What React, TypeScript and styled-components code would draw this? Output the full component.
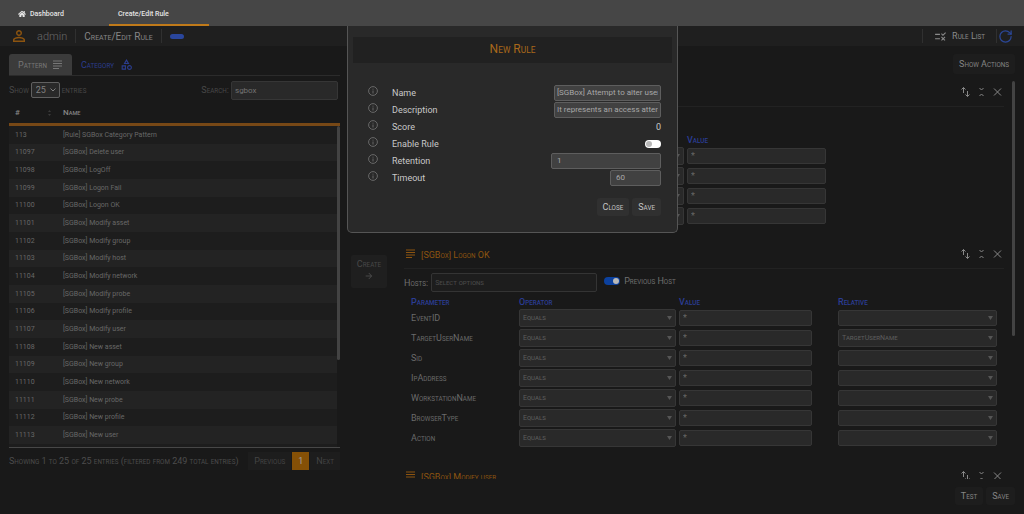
import React from "react";
import styled, { createGlobalStyle, css } from "styled-components";
import { RotateCw } from "lucide-react";
import { FaHome } from "react-icons/fa";
import { MdOutlineCategory, MdPersonOutline, MdRule, MdArrowForward } from "react-icons/md";

const GlobalStyle = createGlobalStyle`
  * { box-sizing: border-box; }
  body { margin: 0; background: #191919; color: #777; font-family: Roboto, "Liberation Sans", sans-serif; font-size: 9px; }
  button, input, select { font: inherit; color: inherit; margin: 0; }
  svg { display: block; flex: none; }
`;

const Page = styled.div`
  position: relative;
  display: flex;
  flex-direction: column;
  height: 100vh;
  min-height: 480px;
  overflow: hidden;
`;

const CapsText = styled.span`
  white-space: pre-wrap;
`;

const SmallLetters = styled.span`
  font-size: 70%;
  text-transform: uppercase;
`;

/* Small capitals: each run of lower-case letters is set as reduced capitals. */
function Caps({ children }: { children: string }) {
  return (
    <CapsText>
      {children.split(/([a-z]+)/).map((part, i) => (i % 2 ? <SmallLetters key={i}>{part}</SmallLetters> : part))}
    </CapsText>
  );
}

const TopTabs = styled.nav`
  display: flex;
  flex: none;
  height: 26px;
  padding-left: 9px;
  background: #464646;
`;

const TopTab = styled.a<{ $active?: boolean }>`
  display: flex;
  align-items: center;
  gap: 4px;
  width: 100px;
  padding: 3px 9px 0;
  border-bottom: 2px solid ${(p) => (p.$active ? "#c07a1a" : "transparent")};
  color: #e4e4e4;
  font-size: 7px;
  font-weight: 500;
  text-decoration: none;
`;

const UserBar = styled.header`
  display: flex;
  flex: none;
  align-items: center;
  height: 20px;
  padding: 0 11px 0 10px;
  background: #1f1f1f;
`;

const UserName = styled.span`
  margin-left: 9px;
  color: #686868;
  font-size: 11px;
  font-weight: 300;
`;

const PageTitle = styled.h1`
  margin: 0;
  color: #868686;
  font-size: 10px;
  font-weight: 400;
`;

const Separator = styled.span<{ $tight?: boolean }>`
  width: 1px;
  height: 14px;
  margin: ${(p) => (p.$tight ? "0 1px 0 8px" : "0 8px")};
  background: #303030;
`;

const Pill = styled.span`
  width: 14px;
  height: 5px;
  border-radius: 3px;
  background: #2a469c;
`;

const RuleListLink = styled.a`
  display: flex;
  align-items: center;
  gap: 5px;
  margin: 0 3px;
  color: #8a8a8a;
  text-decoration: none;
`;

const Spacer = styled.span`
  flex: 1;
`;

const IconButton = styled.button`
  display: flex;
  padding: 0;
  border: 0;
  background: none;
  color: inherit;
`;

const Main = styled.main`
  display: grid;
  flex: 1;
  grid-template-columns: minmax(0, 331fr) 64px minmax(0, 611fr);
  min-height: 0;
  padding: 8px 9px 9px;
`;

const PatternPanel = styled.section`
  display: flex;
  flex-direction: column;
  min-height: 0;
  padding-bottom: 35px;
`;

const PanelTabs = styled.div`
  display: flex;
  flex: none;
  height: 22px;
  border-bottom: 1px solid #2b2b2b;
`;

const PanelTab = styled.button<{ $active?: boolean }>`
  display: flex;
  align-items: center;
  gap: 6px;
  padding: 0 10px 0 9px;
  border: 0;
  border-radius: 3px 3px 0 0;
  background: ${(p) => (p.$active ? "#3b3b3b" : "transparent")};
  color: ${(p) => (p.$active ? "#777" : "#2b3d8f")};
`;

const Filters = styled.div`
  display: flex;
  flex: none;
  align-items: center;
  justify-content: space-between;
  height: 28px;
  padding-right: 2px;
  color: #484848;
`;

const FilterLabel = styled.label`
  display: flex;
  align-items: center;
  gap: 2px;
`;

const fieldLook = css`
  border: 1px solid #363636;
  border-radius: 2px;
  background: #292929;
  outline: none;
`;

const CountBox = styled.span`
  position: relative;
  display: flex;
`;

const CountSelect = styled.select`
  ${fieldLook}
  appearance: none;
  width: 29px;
  height: 16px;
  padding: 0 4px;
  border-color: #606060;
  color: #808080;
`;

const SearchInput = styled.input`
  ${fieldLook}
  width: 107px;
  height: 19px;
  padding: 0 3px;
  color: #737373;
  font-size: 8px;
`;

const PatternTable = styled.table`
  width: 100%;
  border-collapse: collapse;
  table-layout: fixed;
  color: #686868;
  font-size: 7px;
  text-align: left;
`;

const HeadRow = styled.div`
  flex: none;
  height: 22px;
  border-bottom: 3px solid #774816;
`;

const HeadCell = styled.th<{ $id?: boolean }>`
  width: ${(p) => (p.$id ? "48px" : "auto")};
  height: 17px;
  padding: 0 6px;
  color: #858585;
  font-size: 8px;
  font-weight: 500;
`;

const HeadContent = styled.div`
  display: flex;
  align-items: center;
  justify-content: space-between;
`;

const ScrollRow = styled.div`
  display: flex;
  flex: 1 1 0;
  min-height: 0;
  border-bottom: 1px solid #474747;
`;

const ScrollBody = styled.div`
  flex: 1;
  min-width: 0;
  overflow: hidden;
  background: #1d1d1d;
`;

const BodyTable = styled(PatternTable)`
  height: 318px;
`;

const BodyRow = styled.tr`
  background: #1d1d1d;
  &:nth-child(even) { background: #232323; }
`;

const BodyCell = styled.td<{ $id?: boolean }>`
  width: ${(p) => (p.$id ? "48px" : "auto")};
  padding: 0 6px;
`;

const ScrollTrack = styled.div`
  width: 3px;
  background: #191919;
`;

const ScrollThumb = styled.div<{ $size: string }>`
  height: ${(p) => p.$size};
  border-radius: 2px;
  background: #434343;
`;

const TableFoot = styled.div`
  display: flex;
  flex: none;
  align-items: center;
  justify-content: space-between;
  height: 22px;
  padding-top: 4px;
  color: #4c4c4c;
  white-space: nowrap;
`;

const Pager = styled.div`
  display: flex;
  gap: 1px;
`;

const PageButton = styled.button<{ $current?: boolean }>`
  height: 18px;
  padding: 0 6px;
  border: 0;
  background: ${(p) => (p.$current ? "#855006" : "#1d1d1d")};
  color: ${(p) => (p.$current ? "#a0a0a0" : "#444")};
`;

const CreateColumn = styled.div`
  padding: 201px 17px 0 11px;
`;

const CreateButton = styled.button`
  display: flex;
  flex-direction: column;
  align-items: center;
  gap: 2px;
  width: 100%;
  padding: 4px 0 7px;
  border: 0;
  border-radius: 2px;
  background: #1f1f1f;
  color: #484848;
`;

const RulePanel = styled.section`
  display: flex;
  flex-direction: column;
  min-height: 0;
`;

const ButtonRow = styled.div`
  display: flex;
  flex: none;
  justify-content: flex-end;
  gap: 3px;
`;

const TextButton = styled.button<{ $tall?: boolean; $bright?: boolean }>`
  height: ${(p) => (p.$tall ? "20px" : "18px")};
  padding: 0 6px;
  border: 0;
  border-radius: 3px;
  background: ${(p) => (p.$bright ? "#303030" : "#1d1d1d")};
  color: ${(p) => (p.$bright ? "#c4c4c4" : "#858585")};
`;

const RuleScroll = styled.div`
  display: flex;
  flex: 1 1 0;
  min-height: 0;
  margin: 7px 0 8px;
  overflow: hidden;
`;

const RuleList = styled.div`
  flex: 1;
  min-width: 0;
  padding-right: 8px;
`;

const RuleCard = styled.article`
  padding-bottom: 17px;
`;

const RuleHead = styled.div`
  display: flex;
  align-items: center;
  height: 26px;
  padding: 0 1px 4px 2px;
  border-bottom: 1px solid #222;
  color: #8c5410;
`;

const RuleTitle = styled.h2`
  flex: 1;
  margin: 0 0 0 6px;
  padding-top: 2px;
  font-size: 9px;
  font-weight: 400;
`;

const RuleTools = styled.div`
  display: flex;
  gap: 5px;
  color: #888;
`;

const HostRow = styled.div`
  display: flex;
  align-items: center;
  height: 27px;
  color: #707070;
`;

const HostInput = styled.input`
  ${fieldLook}
  width: 166px;
  height: 19px;
  margin: 0 7px 0 3px;
  padding: 0 3px;
  background: #1d1d1d;
  border-color: #343434;
  font-variant: small-caps;
  font-size: 7px;
  &::placeholder { color: #4a4a4a; opacity: 1; }
`;

const ToggleLabel = styled.label`
  display: flex;
  align-items: center;
  gap: 4px;
  padding-bottom: 4px;
`;

const Toggle = styled.input`
  appearance: none;
  display: flex;
  align-items: center;
  width: 16px;
  height: 8px;
  padding: 0 1px;
  border-radius: 4px;
  background: #fff;
  &::before {
    content: "";
    width: 6px;
    height: 6px;
    border-radius: 50%;
    background: #b8b8b8;
  }
  &:checked { justify-content: flex-end; background: #0c419e; }
`;

const ParamTable = styled.div<{ $columns: string }>`
  display: grid;
  grid-template-columns: ${(p) => p.$columns};
  grid-template-rows: 12px;
  grid-auto-rows: 20px;
  column-gap: 3px;
  align-items: center;
  padding: 0 7px;
  color: #6a6a6a;
`;

const ParamHead = styled.div<{ $inset?: boolean }>`
  margin-left: ${(p) => (p.$inset ? "23px" : "0")};
  color: #2b3d96;
  font-weight: 500;
`;

const SelectBox = styled.div<{ $inset?: boolean }>`
  position: relative;
  display: flex;
  margin-left: ${(p) => (p.$inset ? "23px" : "0")};
`;

const ParamSelect = styled.select<{ $short?: boolean }>`
  ${fieldLook}
  appearance: none;
  width: 100%;
  height: ${(p) => (p.$short ? "16px" : "18px")};
  padding: 0 3px;
  color: #5c5c5c;
  font-size: 7px;
  font-variant: small-caps;
`;

const SelectArrow = styled.svg`
  position: absolute;
  right: 4px;
  top: 50%;
  margin-top: -2px;
  color: #555;
  pointer-events: none;
`;

const ValueInput = styled.input`
  ${fieldLook}
  width: 100%;
  height: 16px;
  padding: 0 3px;
  color: #666;
`;

const Modal = styled.div`
  position: absolute;
  top: 26px;
  left: 50%;
  width: 331px;
  margin-left: -165px;
  padding: 11px 5px 16px;
  border: 1px solid #555;
  border-top: 0;
  border-radius: 0 0 5px 5px;
  background: #292929;
  color: #c8c8c8;
`;

const ModalTitle = styled.h2`
  margin: 0;
  background: #212121;
  color: #a9681a;
  font-size: 12px;
  font-weight: 400;
  line-height: 25px;
  text-align: center;
`;

const ModalForm = styled.form`
  padding: 21px 11px 0 15px;
`;

const FormRow = styled.div`
  display: flex;
  align-items: center;
  height: 17px;
`;

const FormLabel = styled.label`
  flex: 1;
  margin-left: 14px;
`;

const InfoIcon = styled.svg`
  margin-bottom: 3px;
  color: #777;
`;

const FormInput = styled.input<{ $width: string; $indent?: boolean }>`
  width: ${(p) => p.$width};
  height: 16px;
  padding: 0 ${(p) => (p.$indent ? "5px" : "2px")};
  border: 1px solid #5e5e5e;
  border-radius: 2px;
  background: #414141;
  color: #a8a8a8;
  font-size: 8px;
  outline: none;
`;

const ModalActions = styled(ButtonRow)`
  margin-top: 12px;
`;

const patterns: [string, string][] = [
  ["113", "[Rule] SGBox Category Pattern"],
  ["11097", "[SGBox] Delete user"],
  ["11098", "[SGBox] LogOff"],
  ["11099", "[SGBox] Logon Fail"],
  ["11100", "[SGBox] Logon OK"],
  ["11101", "[SGBox] Modify asset"],
  ["11102", "[SGBox] Modify group"],
  ["11103", "[SGBox] Modify host"],
  ["11104", "[SGBox] Modify network"],
  ["11105", "[SGBox] Modify probe"],
  ["11106", "[SGBox] Modify profile"],
  ["11107", "[SGBox] Modify user"],
  ["11108", "[SGBox] New asset"],
  ["11109", "[SGBox] New group"],
  ["11110", "[SGBox] New network"],
  ["11111", "[SGBox] New probe"],
  ["11112", "[SGBox] New profile"],
  ["11113", "[SGBox] New user"],
];

const logonParams = ["EventID", "TargetUserName", "Sid", "IpAddress", "WorkstationName", "BrowserType", "Action"];

function SubjectIcon() {
  return (
    <svg width="9" height="9" viewBox="0 0 18 18" stroke="currentColor" strokeWidth="2">
      <path d="M0 2h18M0 7h18M0 12h18M0 17h12" />
    </svg>
  );
}

function Arrow() {
  return (
    <SelectArrow width="5" height="4" viewBox="0 0 5 4">
      <path d="M0 0h5L2.500 4z" fill="currentColor" />
    </SelectArrow>
  );
}

function Tools() {
  return (
    <RuleTools>
      <IconButton type="button" aria-label="Move rule">
        <svg width="11" height="12" viewBox="0 0 22 24" fill="none" stroke="currentColor" strokeWidth="2">
          <path d="M7 14V3M3 7l4-4 4 4M15 10v11M11 17l4 4 4-4" />
        </svg>
      </IconButton>
      <IconButton type="button" aria-label="Collapse rule">
        <svg width="11" height="12" viewBox="0 0 22 24" fill="none" stroke="currentColor" strokeWidth="2">
          <path d="M7 4l4 4 4-4M7 20l4-4 4 4" />
        </svg>
      </IconButton>
      <IconButton type="button" aria-label="Remove rule">
        <svg width="11" height="12" viewBox="0 0 22 24" fill="none" stroke="currentColor" strokeWidth="2">
          <path d="M4 5l14 14M18 5L4 19" />
        </svg>
      </IconButton>
    </RuleTools>
  );
}

function Info() {
  return (
    <InfoIcon width="10" height="10" viewBox="0 0 20 20" fill="none" stroke="currentColor" strokeWidth="1.6">
      <circle cx="10" cy="10" r="8.8" />
      <path d="M10 9v6M10 5.4v1.8" />
    </InfoIcon>
  );
}

function FirstRule() {
  return (
    <RuleCard>
      <RuleHead>
        <Spacer />
        <Tools />
      </RuleHead>
      <HostRow />
      <ParamTable $columns="105fr 165fr 139fr 168fr">
        <span />
        <span />
        <ParamHead><Caps>Value</Caps></ParamHead>
        <span />
        {[1, 2, 3, 4].map((n) => (
          <React.Fragment key={n}>
            <span />
            <SelectBox>
              <ParamSelect aria-label={`Operator ${n}`} />
              <Arrow />
            </SelectBox>
            <ValueInput aria-label={`Value ${n}`} defaultValue="*" />
            <span />
          </React.Fragment>
        ))}
      </ParamTable>
    </RuleCard>
  );
}

function LogonRule() {
  return (
    <RuleCard>
      <RuleHead>
        <SubjectIcon />
        <RuleTitle><Caps>[SGBox] Logon OK</Caps></RuleTitle>
        <Tools />
      </RuleHead>
      <HostRow>
        <label htmlFor="hosts"><Caps>Hosts:</Caps></label>
        <HostInput id="hosts" placeholder="Select options" />
        <ToggleLabel>
          <Toggle type="checkbox" defaultChecked />
          <Caps>Previous Host</Caps>
        </ToggleLabel>
      </HostRow>
      <ParamTable $columns="105fr 157fr 133fr 182fr">
        <ParamHead><Caps>Parameter</Caps></ParamHead>
        <ParamHead><Caps>Operator</Caps></ParamHead>
        <ParamHead><Caps>Value</Caps></ParamHead>
        <ParamHead $inset><Caps>Relative</Caps></ParamHead>
        {logonParams.map((name) => {
          const relative = name === "TargetUserName";
          return (
            <React.Fragment key={name}>
              <Caps>{name}</Caps>
              <SelectBox>
                <ParamSelect aria-label={`${name} operator`}>
                  <option>Equals</option>
                </ParamSelect>
                <Arrow />
              </SelectBox>
              <ValueInput aria-label={`${name} value`} defaultValue="*" />
              <SelectBox $inset>
                <ParamSelect $short={!relative} aria-label={`${name} relative`}>
                  <option>{relative ? "TargetUserName" : ""}</option>
                </ParamSelect>
                <Arrow />
              </SelectBox>
            </React.Fragment>
          );
        })}
      </ParamTable>
    </RuleCard>
  );
}

function NewRuleDialog() {
  return (
    <Modal role="dialog" aria-labelledby="dialog-title">
      <ModalTitle id="dialog-title"><Caps>New Rule</Caps></ModalTitle>
      <ModalForm>
        <FormRow>
          <Info />
          <FormLabel htmlFor="name">Name</FormLabel>
          <FormInput id="name" $width="107px" defaultValue="[SGBox] Attempt to alter user" />
        </FormRow>
        <FormRow>
          <Info />
          <FormLabel htmlFor="description">Description</FormLabel>
          <FormInput id="description" $width="107px" defaultValue="It represents an access attempt" />
        </FormRow>
        <FormRow>
          <Info />
          <FormLabel as="span">Score</FormLabel>
          <span>0</span>
        </FormRow>
        <FormRow>
          <Info />
          <FormLabel htmlFor="enable">Enable Rule</FormLabel>
          <Toggle id="enable" type="checkbox" />
        </FormRow>
        <FormRow>
          <Info />
          <FormLabel htmlFor="retention">Retention</FormLabel>
          <FormInput id="retention" $width="110px" $indent defaultValue="1" />
        </FormRow>
        <FormRow>
          <Info />
          <FormLabel htmlFor="timeout">Timeout</FormLabel>
          <FormInput id="timeout" $width="51px" $indent defaultValue="60" />
        </FormRow>
        <ModalActions>
          <TextButton type="button" $bright><Caps>Close</Caps></TextButton>
          <TextButton type="button" $bright><Caps>Save</Caps></TextButton>
        </ModalActions>
      </ModalForm>
    </Modal>
  );
}

export default function App() {
  return (
    <Page>
      <GlobalStyle />
      <TopTabs>
        <TopTab href="#dashboard"><FaHome size={8} />Dashboard</TopTab>
        <TopTab href="#rule" $active>Create/Edit Rule</TopTab>
      </TopTabs>
      <UserBar>
        <MdPersonOutline size={18} color="#8c5410" />
        <UserName>admin</UserName>
        <Separator />
        <PageTitle><Caps>Create/Edit Rule</Caps></PageTitle>
        <Separator />
        <Pill />
        <Spacer />
        <Separator />
        <RuleListLink href="#rules"><MdRule size={13} /><Caps>Rule List</Caps></RuleListLink>
        <Separator $tight />
        <IconButton type="button" aria-label="Refresh"><RotateCw size={15} color="#2b4796" /></IconButton>
      </UserBar>
      <Main>
        <PatternPanel>
          <PanelTabs>
            <PanelTab type="button" $active><Caps>Pattern</Caps><SubjectIcon /></PanelTab>
            <PanelTab type="button"><Caps>Category</Caps><MdOutlineCategory size={13} /></PanelTab>
          </PanelTabs>
          <Filters>
            <FilterLabel>
              <Caps>Show</Caps>
              <CountBox>
                <CountSelect><option>25</option></CountSelect>
                <SelectArrow width="6" height="4" viewBox="0 0 6 4" fill="none" stroke="#808080">
                  <path d="M0.5 0.5L3 3L5.5 0.5" />
                </SelectArrow>
              </CountBox>
              <Caps>entries</Caps>
            </FilterLabel>
            <FilterLabel>
              <Caps>Search:</Caps>
              <SearchInput defaultValue="sgbox" />
            </FilterLabel>
          </Filters>
          <HeadRow>
            <PatternTable>
              <thead>
                <tr>
                  <HeadCell $id>
                    <HeadContent>
                      #
                      <svg width="3" height="6" viewBox="0 0 3 6" fill="#3a3a3a">
                        <path d="M0 2L1.5 0L3 2zM0 4h3L1.5 6z" />
                      </svg>
                    </HeadContent>
                  </HeadCell>
                  <HeadCell><Caps>Name</Caps></HeadCell>
                </tr>
              </thead>
            </PatternTable>
          </HeadRow>
          <ScrollRow>
            <ScrollBody>
              <BodyTable>
                <tbody>
                  {patterns.map(([id, name]) => (
                    <BodyRow key={id}><BodyCell $id>{id}</BodyCell><BodyCell>{name}</BodyCell></BodyRow>
                  ))}
                </tbody>
              </BodyTable>
            </ScrollBody>
            <ScrollTrack><ScrollThumb $size="73%" /></ScrollTrack>
          </ScrollRow>
          <TableFoot>
            <Caps>Showing 1 to 25 of 25 entries (filtered from 249 total entries)</Caps>
            <Pager>
              <PageButton type="button"><Caps>Previous</Caps></PageButton>
              <PageButton type="button" $current>1</PageButton>
              <PageButton type="button"><Caps>Next</Caps></PageButton>
            </Pager>
          </TableFoot>
        </PatternPanel>
        <CreateColumn>
          <CreateButton type="button"><Caps>Create</Caps><MdArrowForward size={10} /></CreateButton>
        </CreateColumn>
        <RulePanel>
          <ButtonRow><TextButton type="button" $tall><Caps>Show Actions</Caps></TextButton></ButtonRow>
          <RuleScroll>
            <RuleList>
              <FirstRule />
              <LogonRule />
              <RuleCard>
                <RuleHead>
                  <SubjectIcon />
                  <RuleTitle><Caps>[SGBox] Modify user</Caps></RuleTitle>
                  <Tools />
                </RuleHead>
              </RuleCard>
            </RuleList>
            <ScrollTrack><ScrollThumb $size="64%" /></ScrollTrack>
          </RuleScroll>
          <ButtonRow>
            <TextButton type="button"><Caps>Test</Caps></TextButton>
            <TextButton type="button"><Caps>Save</Caps></TextButton>
          </ButtonRow>
        </RulePanel>
      </Main>
      <NewRuleDialog />
    </Page>
  );
}
